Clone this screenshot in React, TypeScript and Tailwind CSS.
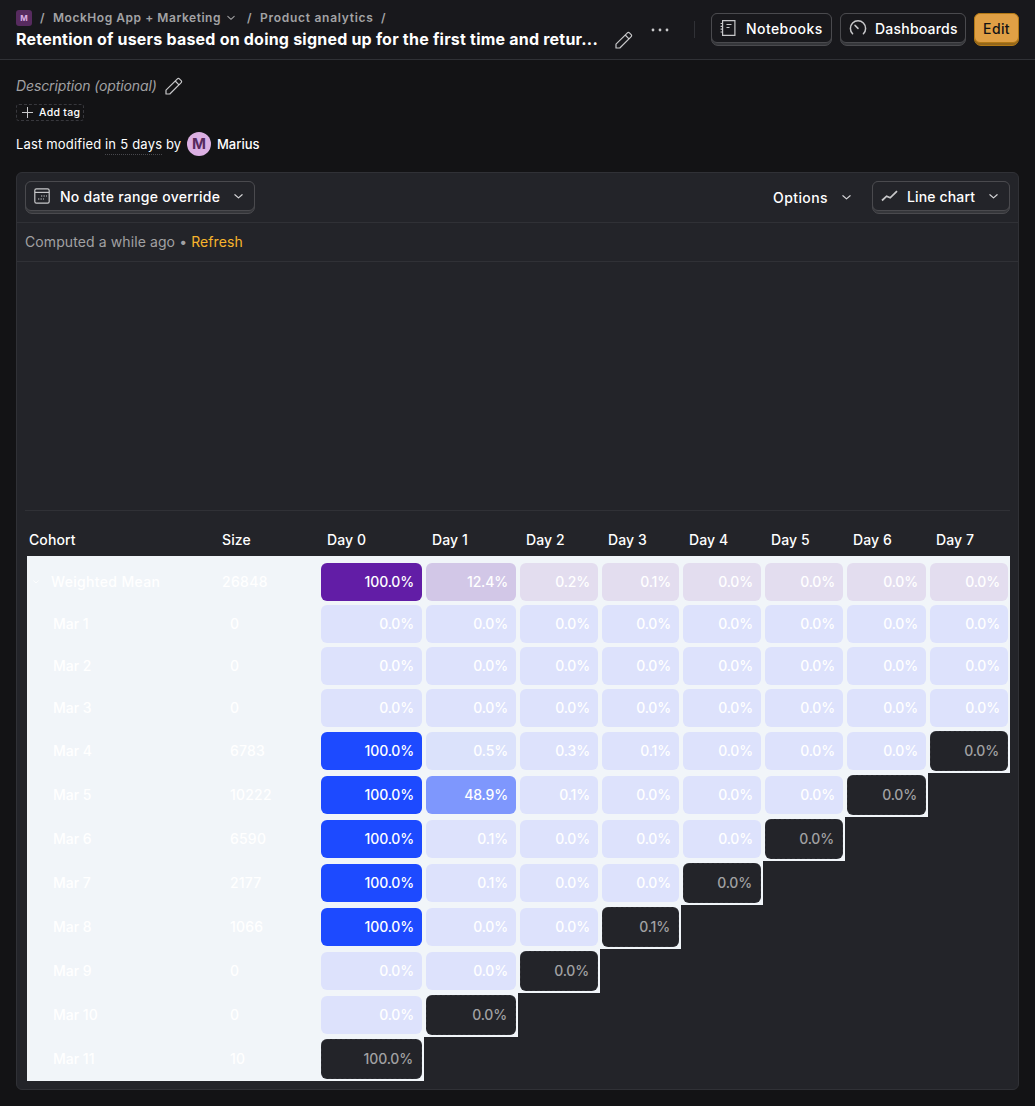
import React from 'react'

const COLS = 'grid grid-cols-[193px_99px_105px_94px_82px_81px_82px_82px_83px_82px]'

type Row = { label: string; size: string; values: string[]; complete?: boolean }

const ROWS: Row[] = [
  { label: 'Mar 1', size: '0', values: ['0.0%', '0.0%', '0.0%', '0.0%', '0.0%', '0.0%', '0.0%', '0.0%'], complete: true },
  { label: 'Mar 2', size: '0', values: ['0.0%', '0.0%', '0.0%', '0.0%', '0.0%', '0.0%', '0.0%', '0.0%'], complete: true },
  { label: 'Mar 3', size: '0', values: ['0.0%', '0.0%', '0.0%', '0.0%', '0.0%', '0.0%', '0.0%', '0.0%'], complete: true },
  { label: 'Mar 4', size: '6783', values: ['100.0%', '0.5%', '0.3%', '0.1%', '0.0%', '0.0%', '0.0%', '0.0%'] },
  { label: 'Mar 5', size: '10222', values: ['100.0%', '48.9%', '0.1%', '0.0%', '0.0%', '0.0%', '0.0%'] },
  { label: 'Mar 6', size: '6590', values: ['100.0%', '0.1%', '0.0%', '0.0%', '0.0%', '0.0%'] },
  { label: 'Mar 7', size: '2177', values: ['100.0%', '0.1%', '0.0%', '0.0%', '0.0%'] },
  { label: 'Mar 8', size: '1066', values: ['100.0%', '0.0%', '0.0%', '0.1%'] },
  { label: 'Mar 9', size: '0', values: ['0.0%', '0.0%', '0.0%'] },
  { label: 'Mar 10', size: '0', values: ['0.0%', '0.0%'] },
  { label: 'Mar 11', size: '10', values: ['100.0%'] },
]

const MEAN = ['100.0%', '12.4%', '0.2%', '0.1%', '0.0%', '0.0%', '0.0%', '0.0%']

function Chevron({ className = '' }: { className?: string }) {
  return (
    <svg viewBox="0 0 10 10" className={`shrink-0 ${className}`} fill="none" stroke="currentColor" strokeWidth="1.3" strokeLinecap="round" strokeLinejoin="round">
      <path d="M1 3l4 3.6L9 3" />
    </svg>
  )
}

function Pencil() {
  return (
    <svg viewBox="0 0 18 18" className="h-[18px] w-[18px] shrink-0 text-[#c8c8ca]" fill="none" stroke="currentColor" strokeWidth="1.2" strokeLinejoin="round">
      <path d="M1 17v-3.8L12.4 1.8a1.4 1.4 0 0 1 2 0l1.8 1.8a1.4 1.4 0 0 1 0 2L4.8 17zM10.2 4l3.8 3.8" />
    </svg>
  )
}

function RaisedButton({ className, children }: { className: string; children: React.ReactNode }) {
  return (
    <button className={`flex h-[33px] items-start rounded-[7px] border border-[#4a4a4e] bg-[#35363a] text-left ${className}`}>
      <span className="-mx-px -mt-px flex h-[30px] flex-1 items-center rounded-[6px] border border-[#4a4a4e] pl-2 font-medium text-white">
        {children}
      </span>
    </button>
  )
}

function valueColor(value: string) {
  if (value === '100.0%') return 'bg-[#1d4aff]'
  if (value === '48.9%') return 'bg-[#7e97fd]'
  if (value === '0.5%') return 'bg-[#dbe2fb]'
  return 'bg-[#dde2fc]'
}

function meanColor(value: string) {
  if (value === '100.0%') return 'bg-[#621da6]'
  if (value === '12.4%') return 'bg-[#d2c7e7]'
  return 'bg-[#e3ddef]'
}

export default function App() {
  return (
    <div className="h-[1106px] w-[1035px] overflow-hidden bg-[#131315] font-['Inter',sans-serif] text-[14px] leading-5 text-white">
      <header className="flex h-[60px] border-b border-[#303136] bg-[#18181c] pl-4 pr-4">
        <div className="w-[585px] pt-[9px]">
          <div className="flex h-[18px] items-center text-[12px] font-semibold leading-[18px] tracking-[0.54px] text-[#a3a3a5]">
            <span className="flex h-4 w-4 items-center justify-center rounded-[3px] bg-[#572b5f] text-[8px] font-bold tracking-normal text-[#dcb0e3]">M</span>
            <span className="ml-2 w-[13px]">/</span>
            <span className="w-[174px] whitespace-nowrap">MockHog App + Marketing</span>
            <Chevron className="h-2 w-2" />
            <span className="ml-3 w-[13px]">/</span>
            <span className="w-[121px] whitespace-nowrap tracking-[0.73px]">Product analytics</span>
            <span>/</span>
          </div>
          <h1 className="w-[585px] whitespace-nowrap text-[16px] font-bold leading-6 tracking-[0.21px]">Retention of users based on doing signed up for the first time and retur...</h1>
        </div>
        <div className="ml-[14px] mt-[31px]"><Pencil /></div>
        <svg viewBox="0 0 18 4" className="ml-[18px] mt-7 h-1 w-[18px] fill-[#c8c8ca]"><circle cx="2" cy="2" r="1.4" /><circle cx="9" cy="2" r="1.4" /><circle cx="16" cy="2" r="1.4" /></svg>
        <div className="ml-[25px] mt-[21px] h-[17px] w-px bg-[#303136]" />
        <div className="ml-4 mt-[13px] flex gap-2">
          <RaisedButton className="w-[121px] [&>span]:bg-[#18181c]">
            <svg viewBox="0 0 18 18" className="mr-2 h-[18px] w-[18px] text-[#c8c8ca]" fill="none" stroke="currentColor" strokeWidth="1.2">
              <path d="M2.6 1.6h12.3v14.8H2.6zM.6 4.5h2M.6 7.3h2M.6 10.2h2M.6 13h2M6.5 5.5h5M6.5 8.5h3" />
            </svg>
            <span className="pt-px tracking-[0.42px]">Notebooks</span>
          </RaisedButton>
          <RaisedButton className="w-[126px] [&>span]:bg-[#18181c]">
            <svg viewBox="0 0 18 18" className="mr-2 h-[18px] w-[18px] text-[#c8c8ca]" fill="none" stroke="currentColor" strokeWidth="1.5" strokeLinecap="round">
              <path d="M3.6 14.8a7.6 7.6 0 1 1 10.8 0" />
              <path d="M6 6.4l3 3" />
            </svg>
            <span className="pt-px tracking-[0.22px]">Dashboards</span>
          </RaisedButton>
          <button className="flex h-[33px] w-[45px] items-start rounded-[7px] border border-[#b17816] bg-[#93661b]">
            <span className="-mx-px -mt-px flex h-[30px] flex-1 items-center justify-center rounded-[6px] border border-[#b17816] bg-[#e0a045] pt-px font-medium tracking-[0.35px] text-[#131315]">Edit</span>
          </button>
        </div>
      </header>

      <div className="flex items-start pl-4 pt-4">
        <em className="w-[149px] tracking-[-0.12px] text-[#a1a1a3]">Description (optional)</em>
        <div className="mt-px"><Pencil /></div>
      </div>
      <div className="ml-4 mt-2 flex h-[17px] w-[68px] items-center rounded-[3px] border border-dashed border-[#38383d] pl-[5px]">
        <svg viewBox="0 0 11 11" className="h-[11px] w-[11px]" stroke="#c8c8ca"><path d="M5.5 0v11M0 5.5h11" /></svg>
        <span className="ml-[6px] whitespace-nowrap text-[10.5px] font-medium leading-4 tracking-[0.3px]">Add tag</span>
      </div>
      <div className="ml-4 mt-[11px] flex h-6 items-center text-[13px]">
        <span className="w-[89px] whitespace-nowrap tracking-[0.17px]">Last modified</span>
        <span className="h-[22px] w-[57px] whitespace-nowrap border-b border-dotted border-[#48484d] tracking-[0.22px] [line-height:22px]">in 5 days</span>
        <span className="ml-1 w-[21px]">by</span>
        <span className="flex h-6 w-6 items-center justify-center rounded-full bg-[#dcb0e3] text-[15px] font-bold text-[#572b5f]">M</span>
        <span className="ml-[6px] font-medium">Marius</span>
      </div>

      <main className="mx-4 mt-4 h-[918px] rounded-[6px] border border-[#303136] bg-[#232429]">
        <div className="flex h-[50px] border-b border-[#303136] px-2 pt-2">
          <RaisedButton className="w-[230px] [&>span]:bg-[#232429]">
            <svg viewBox="0 0 16 16" className="mr-[10px] h-4 w-4 text-[#c8c8ca]" fill="none" stroke="currentColor" strokeWidth="1.2">
              <rect x="0.8" y="0.8" width="14.4" height="14.4" rx="1.6" />
              <path d="M1 4.4h14" />
              <path d="M7 8h6M4 11h6" strokeDasharray="1.3 1.2" />
            </svg>
            <span className="w-[174px] whitespace-nowrap pt-px tracking-[0.28px]">No date range override</span>
            <Chevron className="h-[9px] w-[9px] text-[#d4d4d6]" />
          </RaisedButton>
          <div className="ml-auto flex h-[33px] w-[99px] items-center font-medium">
            <span className="w-[69px] tracking-[0.42px]">Options</span>
            <Chevron className="h-[9px] w-[9px] text-[#d4d4d6]" />
          </div>
          <RaisedButton className="w-[138px] [&>span]:bg-[#232429]">
            <svg viewBox="0 0 18 18" className="mr-2 h-[18px] w-[18px] text-[#c8c8ca]" fill="none" stroke="currentColor" strokeWidth="1.8">
              <path d="M1 13.5l4.6-4.3 3.6 1.6L16 4.2" />
            </svg>
            <span className="w-[82px] pt-px tracking-[0.15px]">Line chart</span>
            <Chevron className="h-[9px] w-[9px] text-[#d4d4d6]" />
          </RaisedButton>
        </div>
        <div className="h-[39px] border-b border-[#303136] pl-2 pt-[9px] tracking-[0.1px] text-[#a1a1a3]">
          Computed a while ago • <a className="text-[#f7b42c]">Refresh</a>
        </div>
        <div className="mx-2 h-[249px] border-b border-[#303136]" />

        <div className="ml-[10px] w-[983px]">
          <div className={`${COLS} h-[45px] pt-[19px] font-medium tracking-[0.1px]`}>
            <span className="pl-[2px]">Cohort</span>
            <span className="pl-[2px]">Size</span>
            {MEAN.map((_, i) => (
              <span key={i} className="pl-2">{`Day ${i}`}</span>
            ))}
          </div>
          <div className={`${COLS} h-[47px] bg-[#f1f5f9] pt-[5px] font-medium`}>
            <span className="flex items-center pl-[6px] tracking-[0.33px]">
              <Chevron className="mr-3 h-[6px] w-[6px]" />
              Weighted Mean
            </span>
            <span className="flex items-center pl-[2px] tracking-[0.3px]">26848</span>
            {MEAN.map((v, i) => (
              <span key={i} className="px-[2px] py-[2px]">
                <span className={`flex h-[38px] items-center justify-end rounded-[6px] pr-2 tracking-[-0.15px] ${meanColor(v)}`}>{v}</span>
              </span>
            ))}
          </div>
          {ROWS.map((row) => (
            <div key={row.label} className={`${COLS} font-medium ${row.complete ? 'h-[42px]' : 'h-[44px]'}`}>
              <span className="flex items-center bg-[#f1f5f9] pl-[26px]">{row.label}</span>
              <span className="flex items-center bg-[#f1f5f9] pl-[10px] tracking-[0.2px]">{row.size}</span>
              {row.values.map((v, i) => {
                const partial = !row.complete && i === row.values.length - 1
                return (
                  <span key={i} className="flex items-center bg-[#f1f5f9] px-[2px] tracking-[-0.15px]">
                    {partial ? (
                      <span className="flex h-10 w-full items-center justify-end rounded-[6px] border border-dashed border-[#303136] bg-[#232429] pr-2 font-medium text-[#a1a1a3]">{v}</span>
                    ) : (
                      <span className={`flex h-[38px] w-full items-center justify-end rounded-[6px] pr-2 ${valueColor(v)}`}>{v}</span>
                    )}
                  </span>
                )
              })}
            </div>
          ))}
        </div>
      </main>
    </div>
  )
}
